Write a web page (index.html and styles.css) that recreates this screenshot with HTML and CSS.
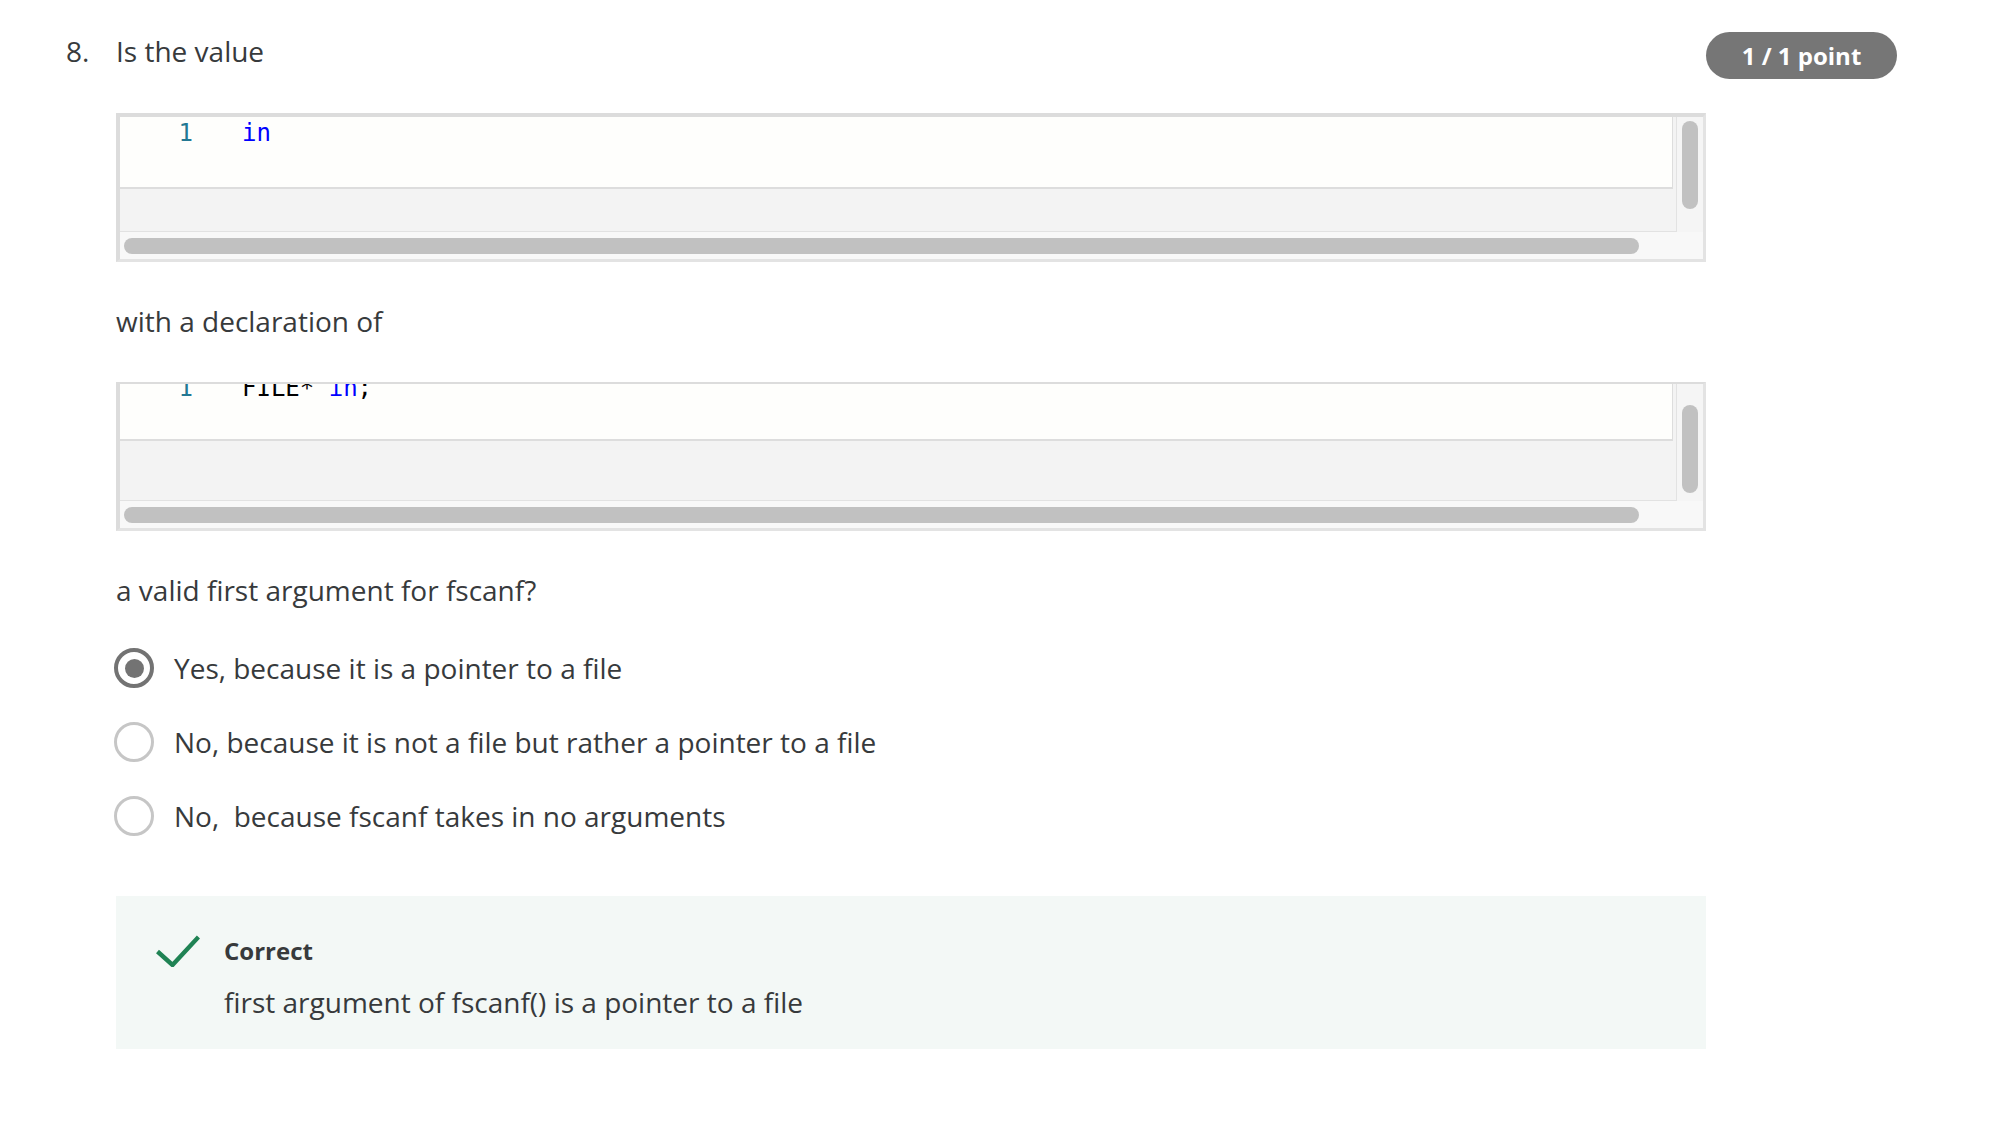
FILE: index.html
```html
<!DOCTYPE html>
<html lang="en">
<head>
<meta charset="utf-8">
<title>Question 8</title>
<link rel="stylesheet" href="styles.css">
</head>
<body>
<div class="question">
  <div class="qnum">8.</div>
  <div class="qbody">
    <p class="prompt first">Is the value</p>

    <div class="editor editor-a">
      <div class="editor-main">
        <div class="viewport">
          <div class="lines">
            <div class="line"><span class="ln">1</span><span class="code"><span class="kw">in</span></span></div>
          </div>
          <div class="filler"></div>
        </div>
        <div class="vtrack"><div class="vthumb"></div></div>
      </div>
      <div class="htrack"><div class="hthumb"></div></div>
    </div>

    <p class="prompt">with a declaration of</p>

    <div class="editor editor-b">
      <div class="editor-main">
        <div class="viewport">
          <div class="lines">
            <div class="line"><span class="ln">1</span><span class="code">FILE* <span class="kw">in</span>;</span></div>
          </div>
          <div class="filler"></div>
        </div>
        <div class="vtrack"><div class="vthumb"></div></div>
      </div>
      <div class="htrack"><div class="hthumb"></div></div>
    </div>

    <p class="prompt">a valid first argument for fscanf?</p>

    <div class="options">
      <label class="option"><span class="radio checked"></span><span class="opt-text">Yes, because it is a pointer to a file</span></label>
      <label class="option"><span class="radio"></span><span class="opt-text">No, because it is not a file but rather a pointer to a file</span></label>
      <label class="option"><span class="radio"></span><span class="opt-text">No,&nbsp; because fscanf takes in no arguments</span></label>
    </div>

    <div class="feedback">
      <svg class="check" width="44" height="32" viewBox="0 0 44 32" aria-hidden="true">
        <polyline points="1.5,16.5 16.5,30 42.5,2" fill="none" stroke="#1f8354" stroke-width="4.4" stroke-linejoin="miter" stroke-linecap="butt"/>
      </svg>
      <div class="fb-text">
        <div class="fb-title">Correct</div>
        <div class="fb-body">first argument of fscanf() is a pointer to a file</div>
      </div>
    </div>
  </div>
  <div class="badge">1 / 1 point</div>
</div>
</body>
</html>
```

FILE: styles.css
```css
html, body {
  margin: 0;
  padding: 0;
  background: #ffffff;
}

body {
  font-family: "Open Sans", "Noto Sans", "Liberation Sans", sans-serif;
  color: #373a3c;
  font-size: 28px;
  line-height: 36px;
}

.question {
  display: flex;
  align-items: flex-start;
  padding: 32px 97px 0 66px;
}

.qnum {
  width: 50px;
  flex: none;
  padding-top: 1px;
}

.qbody {
  flex: 1;
  min-width: 0;
}

.badge {
  flex: none;
  width: 191px;
  height: 47px;
  border-radius: 24px;
  background: #767676;
  color: #ffffff;
  font-weight: 700;
  font-size: 24px;
  line-height: 47px;
  text-align: center;
}

.prompt {
  margin: 41px 0 0 0;
}

.prompt.first {
  margin-top: 0;
  padding-top: 1px;
}

/* code editor boxes */
.editor {
  margin-top: 43px;
  border: 3px solid #e3e3e3;
  border-top: 4px solid #dcdcdc;
  border-left: 4px solid #dcdcdc;
  background: #f7f7f7;
  display: flex;
  flex-direction: column;
}

.editor-a {
  margin-top: 44px;
}

.editor-main {
  display: flex;
}

.viewport {
  flex: 1;
  overflow: hidden;
  border-right: 1px solid #e2e2e2;
  border-bottom: 1px solid #e2e2e2;
  background: #f3f3f3;
}

.lines {
  background: #fefefc;
  border-right: 1px solid #dddddd;
  border-bottom: 2px solid #dddddd;
  margin-right: 3px;
  overflow: hidden;
  font-family: "DejaVu Sans Mono", "Liberation Mono", monospace;
  font-size: 24px;
  line-height: 33px;
}

.line {
  display: flex;
  white-space: pre;
}

.ln {
  width: 73px;
  text-align: right;
  color: #237893;
}

.code {
  margin-left: 49px;
  color: #000000;
}

.kw {
  color: #0000ff;
}

.vtrack {
  width: 26px;
  flex: none;
  background: #f5f5f5;
  display: flex;
  justify-content: center;
}

.vthumb {
  width: 16px;
  height: 88px;
  border-radius: 8px;
  background: #c1c1c1;
}

.htrack {
  height: 27px;
  background: #f8f8f8;
  padding: 6px 0 0 4px;
  box-sizing: border-box;
}

.hthumb {
  width: 1515px;
  height: 16px;
  border-radius: 8px;
  background: #c1c1c1;
}

.editor-a .lines { height: 70px; }
.editor-a .filler { height: 42px; }
.editor-a .vthumb { margin-top: 4px; }

.editor-b {
  border-top-width: 2px;
}
.editor-b .lines { height: 55px; }
.editor-b .line { margin-top: -12px; }
.editor-b .filler { height: 59px; }
.editor-b .vthumb { margin-top: 21px; }

/* options */
.options {
  margin-top: 40px;
  display: flex;
  flex-direction: column;
  gap: 34px;
}

.option {
  display: flex;
  align-items: center;
  height: 40px;
  margin-left: -2px;
}

.radio {
  width: 40px;
  height: 40px;
  box-sizing: border-box;
  border-radius: 50%;
  border: 3px solid #c6c6c6;
  flex: none;
  margin-right: 20px;
  display: flex;
  align-items: center;
  justify-content: center;
  background: #ffffff;
}

.radio.checked {
  border: 4px solid #737373;
}

.radio.checked::after {
  content: "";
  width: 19px;
  height: 19px;
  border-radius: 50%;
  background: #737373;
}

/* feedback */
.feedback {
  margin-top: 60px;
  background: #f3f8f6;
  display: flex;
  align-items: flex-start;
  padding: 39px 0 29px 40px;
}

.check {
  flex: none;
  margin-right: 24px;
}

.fb-title {
  font-weight: 700;
  font-size: 24px;
  line-height: 32px;
}

.fb-body {
  margin-top: 17px;
}
```
